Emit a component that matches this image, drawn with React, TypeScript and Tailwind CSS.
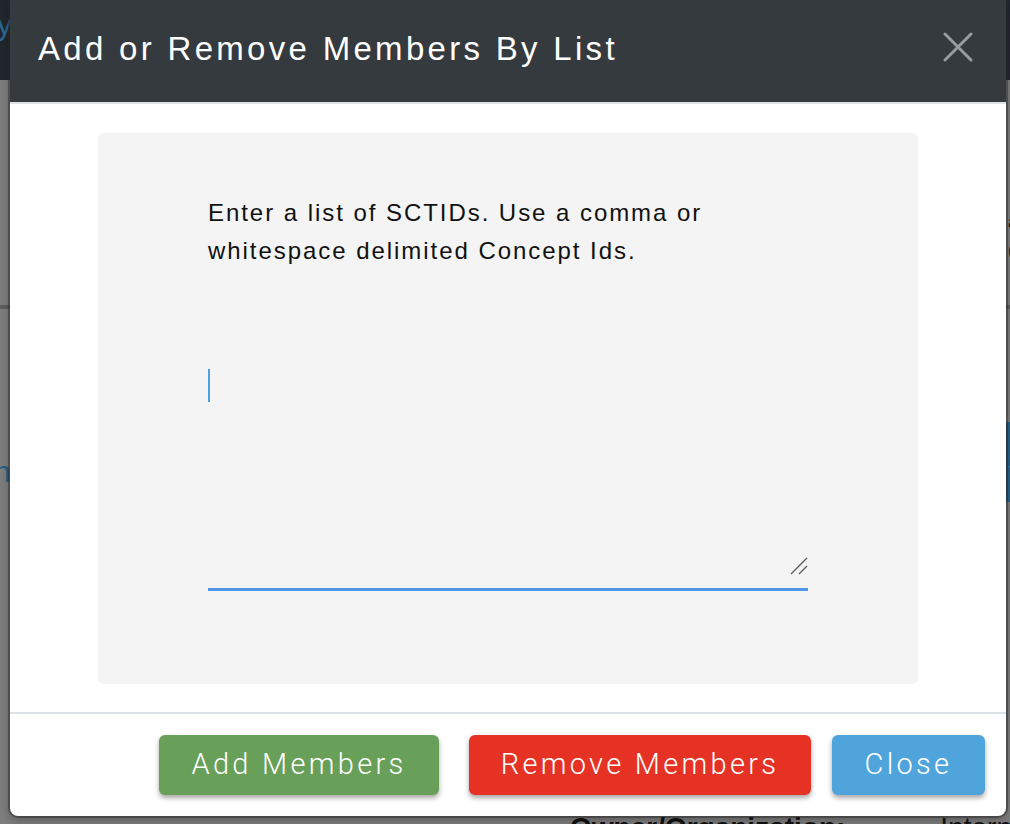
import React from 'react';

// Page behind the dialog, greyed by the backdrop
const BackgroundPage: React.FC = () => {
    return (
        <div className="min-h-[824px] w-full bg-[#7e7e7e] flex flex-col overflow-hidden font-['Liberation_Sans',sans-serif]">
            <div className="h-[80px] bg-[#22272d] flex items-start">
                <span className="-ml-[3px] mt-[2px] text-[30px] text-[#2b6a98]">y</span>
            </div>
            <div className="h-[225px] flex justify-end items-start">
                <div className="mt-[128px] -mr-[8px] flex flex-col text-[18px] leading-[28px] text-[#111]">
                    <span>a</span>
                    <span>(</span>
                </div>
            </div>
            <div className="h-[4px] bg-[#5f5f5f]" />
            <div className="h-[505px] flex justify-between items-start">
                <span className="mt-[140px] -ml-[6px] text-[30px] text-[#255f86]">n</span>
                <div className="mt-[113px] -mr-[40px] w-[44px] h-[80px] bg-[#2b5f82] text-[#8aa6b8] text-[28px] flex items-center pl-[2px]">S</div>
            </div>
            <div className="flex items-start">
                <span className="ml-[570px] text-[28px] font-bold text-[#111] leading-none">Owner/Organization:</span>
                <span className="ml-[95px] text-[28px] text-[#111] leading-none">Intern</span>
            </div>
        </div>
    );
};

const CloseIcon: React.FC = () => (
    <svg width="30" height="30" viewBox="0 0 30 30" fill="none">
        <path d="M2 2 L28 28 M28 2 L2 28" stroke="#9a9b9d" strokeWidth="3" strokeLinecap="round" />
    </svg>
);

const ResizeHandle: React.FC = () => (
    <svg width="18" height="18" viewBox="0 0 18 18" fill="none">
        <path d="M1 17 L17 1 M9 17 L17 9" stroke="#5a5a5a" strokeWidth="1.3" />
    </svg>
);

const App: React.FC = () => {
    return (
        <div className="relative w-full min-h-[824px] overflow-hidden">
            <BackgroundPage />

            {/* Modal dialog */}
            <div className="absolute left-[10px] top-0 w-[996px] bg-white rounded-b-[8px] shadow-[0_0_0_2px_rgba(40,40,40,0.45),0_4px_12px_rgba(0,0,0,0.3)] flex flex-col font-['Liberation_Sans',sans-serif]">
                <div className="h-[104px] bg-[#353a3f] border-b-2 border-[#dfe3e8] flex items-center justify-between pl-[28px] pr-[33px]">
                    <h1 className="text-[33px] tracking-[3.3px] text-white font-normal mt-[-4px]">Add or Remove Members By List</h1>
                    <button className="mt-[-9px]">
                        <CloseIcon />
                    </button>
                </div>

                <div className="px-[88px] pt-[29px] pb-[28px]">
                    <div className="h-[551px] rounded-[6px] bg-[#f4f4f4] pt-[61px]">
                        <div className="w-[600px] mx-auto">
                            <p className="text-[24px] leading-[38px] tracking-[1.95px] text-[#111]">
                                Enter a list of SCTIDs. Use a comma or whitespace delimited Concept Ids.
                            </p>
                            <div className="relative mt-[89px] h-[232px] border-b-[3px] border-[#4d96e8]">
                                <textarea className="w-full h-full resize-none bg-transparent outline-none pt-[10px] text-[26px]" />
                                <div className="absolute left-0 top-[10px] w-[2px] h-[33px] bg-[#4aa3dd]" />
                                <div className="absolute right-0 bottom-[13px]">
                                    <ResizeHandle />
                                </div>
                            </div>
                        </div>
                    </div>
                </div>

                <div className="border-t-2 border-[#dde1e5] h-[104px] flex items-start justify-end pt-[21px] pr-[21px]">
                    <button className="w-[280px] h-[60px] rounded-[6px] bg-[#689f59] text-white text-[29px] tracking-[3.3px] font-light font-['Roboto',sans-serif] shadow-[0_3px_5px_rgba(0,0,0,0.35)]">
                        Add Members
                    </button>
                    <button className="ml-[30px] w-[342px] h-[60px] rounded-[6px] bg-[#e53225] text-white text-[29px] tracking-[3.3px] font-light font-['Roboto',sans-serif] shadow-[0_3px_5px_rgba(0,0,0,0.35)]">
                        Remove Members
                    </button>
                    <button className="ml-[21px] w-[153px] h-[60px] rounded-[6px] bg-[#4fa4db] text-white text-[29px] tracking-[3.3px] font-light font-['Roboto',sans-serif] shadow-[0_3px_5px_rgba(0,0,0,0.35)]">
                        Close
                    </button>
                </div>
            </div>
        </div>
    );
};

export default App;
